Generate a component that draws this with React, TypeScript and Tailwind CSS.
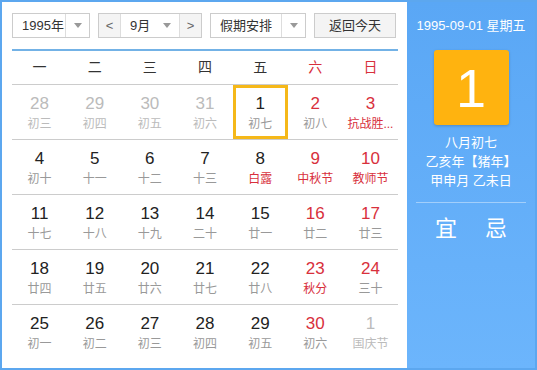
import React from "react"

type Day = {
	d: number
	lunar: string
	red?: boolean
	festival?: boolean
	other?: boolean
	today?: boolean
}

const weeks: Day[][] = [
	[
		{ d: 28, lunar: "初三", other: true },
		{ d: 29, lunar: "初四", other: true },
		{ d: 30, lunar: "初五", other: true },
		{ d: 31, lunar: "初六", other: true },
		{ d: 1, lunar: "初七", today: true },
		{ d: 2, lunar: "初八", red: true },
		{ d: 3, lunar: "抗战胜...", red: true, festival: true },
	],
	[
		{ d: 4, lunar: "初十" },
		{ d: 5, lunar: "十一" },
		{ d: 6, lunar: "十二" },
		{ d: 7, lunar: "十三" },
		{ d: 8, lunar: "白露", festival: true },
		{ d: 9, lunar: "中秋节", red: true, festival: true },
		{ d: 10, lunar: "教师节", red: true, festival: true },
	],
	[
		{ d: 11, lunar: "十七" },
		{ d: 12, lunar: "十八" },
		{ d: 13, lunar: "十九" },
		{ d: 14, lunar: "二十" },
		{ d: 15, lunar: "廿一" },
		{ d: 16, lunar: "廿二", red: true },
		{ d: 17, lunar: "廿三", red: true },
	],
	[
		{ d: 18, lunar: "廿四" },
		{ d: 19, lunar: "廿五" },
		{ d: 20, lunar: "廿六" },
		{ d: 21, lunar: "廿七" },
		{ d: 22, lunar: "廿八" },
		{ d: 23, lunar: "秋分", red: true, festival: true },
		{ d: 24, lunar: "三十", red: true },
	],
	[
		{ d: 25, lunar: "初一" },
		{ d: 26, lunar: "初二" },
		{ d: 27, lunar: "初三" },
		{ d: 28, lunar: "初四" },
		{ d: 29, lunar: "初五" },
		{ d: 30, lunar: "初六", red: true },
		{ d: 1, lunar: "国庆节", other: true },
	],
]

const weekdays = ["一", "二", "三", "四", "五", "六", "日"]

function Caret() {
	return (
		<span className="w-0 h-0 border-l-[4px] border-r-[4px] border-t-[5px] border-l-transparent border-r-transparent border-t-[#999]" />
	)
}

function DayCell({ day }: { day: Day }) {
	const numColor = day.other ? "text-[#bbb]" : day.red ? "text-[#d8303c]" : "text-[#222]"
	const lunarColor = day.other
		? "text-[#bbb]"
		: day.festival
			? "text-[#d8303c]"
			: "text-[#999]"
	return (
		<div
			className={`flex flex-col items-center justify-center h-[54px] pt-[3px] ${
				day.today ? "border-[3px] border-[#f5b819]" : ""
			}`}
		>
			<span className={`text-[17px] leading-[20px] ${numColor}`}>{day.d}</span>
			<span className={`text-[12px] leading-[17px] mt-[2px] whitespace-nowrap ${lunarColor}`}>
				{day.lunar}
			</span>
		</div>
	)
}

export default function App() {
	return (
		<div
			className="w-[537px] h-[370px] flex border-2 border-[#5ca7ef] bg-white"
			style={{ fontFamily: '"Liberation Sans", "Noto Sans CJK SC", sans-serif' }}
		>
			<div className="w-[405px] pl-[10px] pr-[9px] pt-[11px]">
				<div className="flex items-center gap-2 h-[25px] text-[13px] text-[#333]">
					<div className="flex w-[78px] h-full border border-[#ccc]">
						<span className="flex-1 flex items-center pl-[9px]">1995年</span>
						<span className="w-[24px] flex items-center justify-center border-l border-[#ddd]">
							<Caret />
						</span>
					</div>
					<div className="flex w-[104px] h-full border border-[#ccc]">
						<span className="w-[22px] flex items-center justify-center bg-[#f4f4f4] border-r border-[#ddd] text-[#666]">
							&lt;
						</span>
						<span className="flex-1 flex items-center justify-between pl-[9px] pr-[8px]">
							9月
							<Caret />
						</span>
						<span className="w-[22px] flex items-center justify-center bg-[#f4f4f4] border-l border-[#ddd] text-[#666]">
							&gt;
						</span>
					</div>
					<div className="flex w-[96px] h-full border border-[#ccc]">
						<span className="flex-1 flex items-center pl-[9px]">假期安排</span>
						<span className="w-[24px] flex items-center justify-center border-l border-[#ddd]">
							<Caret />
						</span>
					</div>
					<div className="w-[82px] h-full border border-[#ccc] bg-[#f4f4f4] flex items-center justify-center">
						返回今天
					</div>
				</div>
				<div className="mt-[11px] border-t-[2px] border-[#73b2e6]" />
				<div className="grid grid-cols-7 h-[34px] border-b border-[#ccc] text-[14px] items-center text-center">
					{weekdays.map((w, i) => (
						<span key={w} className={i >= 5 ? "text-[#d8303c]" : "text-[#333]"}>
							{w}
						</span>
					))}
				</div>
				{weeks.map((week, i) => (
					<div
						key={i}
						className={`grid grid-cols-7 ${i < weeks.length - 1 ? "border-b border-[#ccc]" : ""}`}
					>
						{week.map((day, j) => (
							<DayCell key={j} day={day} />
						))}
					</div>
				))}
			</div>
			<div className="flex-1 bg-gradient-to-b from-[#5aa7f5] to-[#6cb5fc] flex flex-col items-center text-white">
				<div className="mt-[15px] text-[13px] leading-[18px]">1995-09-01 星期五</div>
				<div className="mt-[15px] w-[75px] h-[75px] rounded-[3px] bg-[#ffb30f] shadow-[0_1px_3px_rgba(0,0,0,0.2)] flex items-center justify-center text-[54px] leading-none">
					1
				</div>
				<div className="mt-[8px] text-[13px] leading-[19px] flex flex-col items-center">
					<span>八月初七</span>
					<span>乙亥年【猪年】</span>
					<span>甲申月 乙未日</span>
				</div>
				<div className="mt-[12px] w-[110px] border-t border-white/40" />
				<div className="mt-[12px] flex gap-[28px] text-[22px] leading-[28px]">
					<span>宜</span>
					<span>忌</span>
				</div>
			</div>
		</div>
	)
}
